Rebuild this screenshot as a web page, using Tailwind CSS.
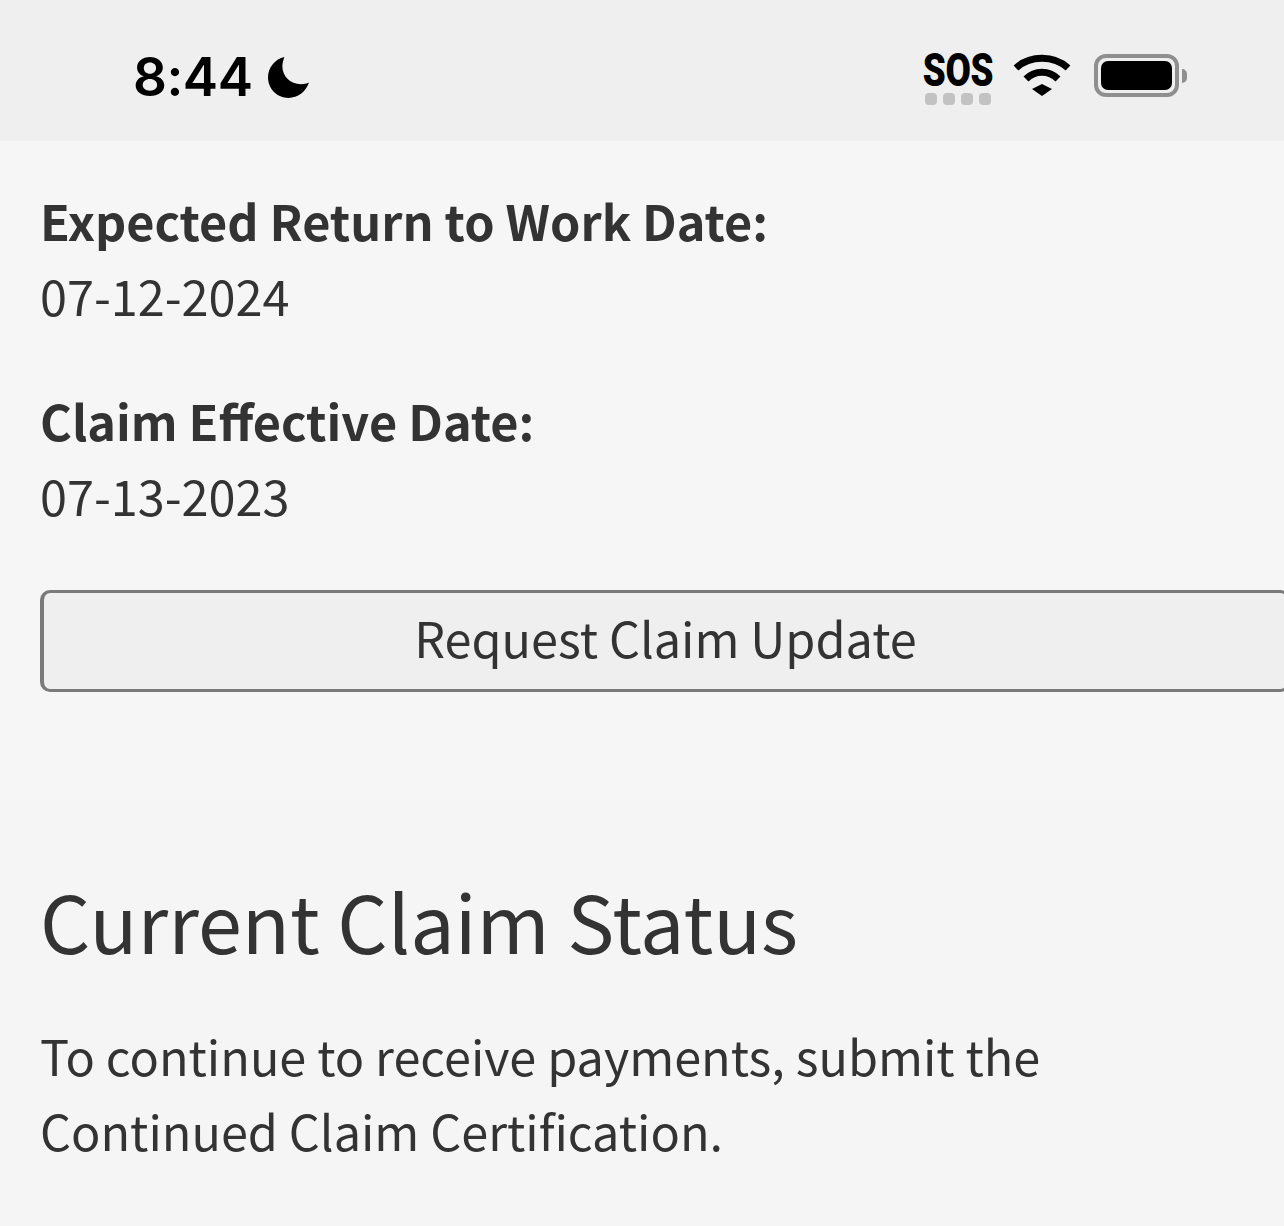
<!DOCTYPE html>
<html lang="en">
<head>
  <meta charset="UTF-8">
  <meta name="viewport" content="width=device-width, initial-scale=1">
  <title>Claim Status</title>
  <script src="https://cdn.jsdelivr.net/npm/@tailwindcss/browser@4"></script>
</head>
<body class="bg-[#f5f5f5] text-[#333] font-['Noto_Sans_CJK_SC',sans-serif] overflow-hidden h-[1226px] w-[1284px]">

  <!-- status bar -->
  <div class="h-[141px] bg-[#efefef] flex items-center justify-between pt-[13px] pl-[133px] pr-[97px] text-black">
    <div class="flex items-center gap-[15px]">
      <span class="font-['Inter',sans-serif] font-semibold text-[53px] leading-none tracking-[-0.5px]">8:44</span>
      <svg class="w-[43px] h-[43px]" viewBox="0 0 42 42"><path fill="#000" d="M17 1 C8 3 1 11 1 21 C1 32 10 41 21 41 C30 41 38 35 41 26 C39 27 36 27.5 33 27.5 C23 27.5 15 20 15 10 C15 7 16 4 17 1 Z"/></svg>
    </div>
    <div class="flex items-center -mt-[3px]">
      <div class="flex flex-col items-center w-[70px] translate-y-[1px]">
        <span class="font-['Roboto',sans-serif] font-black text-[46px] leading-[44px] scale-x-[0.8] tracking-[-0.5px]">SOS</span>
        <div class="flex gap-[6px] mt-[1px]">
          <span class="w-[12px] h-[12px] rounded-[4px] bg-[#c2c2c2]"></span>
          <span class="w-[12px] h-[12px] rounded-[4px] bg-[#c2c2c2]"></span>
          <span class="w-[12px] h-[12px] rounded-[4px] bg-[#c2c2c2]"></span>
          <span class="w-[12px] h-[12px] rounded-[4px] bg-[#c2c2c2]"></span>
        </div>
      </div>
      <svg class="w-[58px] h-[42px] ml-[20px] mb-[2px]" viewBox="0 0 58 42" fill="none">
        <path fill="#000" d="M29 30 L39 35 L29 42 L19 35 Z"/>
        <path stroke="#000" stroke-width="7" d="M13 25 C22 16 36 16 45 25"/>
        <path stroke="#000" stroke-width="7" d="M3 14 C17 1 41 1 55 14"/>
      </svg>
      <div class="flex items-center ml-[23px]">
        <div class="w-[85px] h-[43px] rounded-[12px] border-[4px] border-[#8f8f8f] p-[3px]">
          <div class="w-full h-full rounded-[7px] bg-black"></div>
        </div>
        <div class="w-[5px] h-[14px] ml-[3px] rounded-r-full bg-[#8f8f8f]"></div>
      </div>
    </div>
  </div>

  <div class="bg-[#f6f6f6] h-[659px] pl-[40px] pt-[49px]">
    <div class="font-bold text-[48.6px] leading-[60px]">Expected Return to Work Date:</div>
    <div class="text-[48.6px] leading-[60px] mt-[15px]">07-12-2024</div>
    <div class="font-bold text-[48.6px] leading-[60px] mt-[65px]">Claim Effective Date:</div>
    <div class="text-[48.6px] leading-[60px] mt-[15px]">07-13-2023</div>
    <button class="block w-[1250px] h-[102px] mt-[65px] pb-[7px] rounded-[10px] border-[3px] border-l-[4px] border-[#7a7a7a] bg-[#efefef] text-[48.6px] text-center text-[#333]">Request Claim Update</button>
  </div>

  <div class="pl-[40px] pt-[70px]">
    <h2 class="text-[79px] leading-[100px]">Current Claim Status</h2>
    <p class="text-[48.6px] leading-[75px] mt-[48px]">To continue to receive payments, submit the<br>Continued Claim Certification.</p>
  </div>
</body>
</html>
